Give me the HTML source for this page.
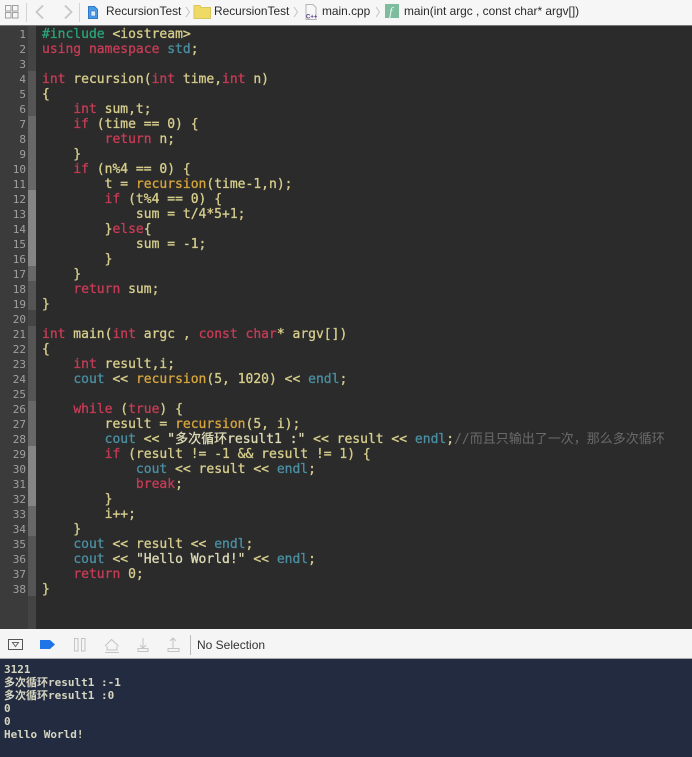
<!DOCTYPE html>
<html><head><meta charset="utf-8">
<style>
html,body{margin:0;padding:0;width:692px;height:757px;overflow:hidden;background:#fff}
*{box-sizing:border-box}
.abs{position:absolute}
#top{left:0;top:0;width:692px;height:26px;background:#f6f6f6;border-bottom:1px solid #777}
.crumb{position:absolute;top:4px;font:11.9px/15px "Liberation Sans",sans-serif;color:#2a2a2a;white-space:pre}
#editor{left:0;top:26px;width:692px;height:603px;background:#2b2b2b}
#gutter{left:0;top:26px;width:28px;height:603px;background:#3b3b3b}
#strip{left:28px;top:26px;width:8px;height:603px;background:#444}
.band{position:absolute;left:28px;width:8px}
#nums{left:0;top:1px;width:28px;height:630px;filter:blur(.3px)}
.ln{position:absolute;left:0;width:26px;text-align:right;font:11px/15px "DejaVu Sans Mono",monospace;color:#a0a0a0}
pre{margin:0}
#code{left:42px;top:27px;font:13px/15px "DejaVu Sans Mono","Noto Sans CJK SC",monospace;color:#d6cd8c;white-space:pre;-webkit-text-stroke:.3px currentColor;filter:blur(.3px)}
.k{color:#c63c56}.c{color:#4a8fa2}.f{color:#d6a53c}.p{color:#2aa377}.w{color:#e0ddb8}.g{color:#6a6a6a;-webkit-text-stroke:0}.s{color:#dedbb6}
#bar{left:0;top:629px;width:692px;height:30px;background:#f5f5f5;border-bottom:1px solid #aaa}
#console{left:0;top:659px;width:692px;height:98px;background:#232b40}
#out{left:4px;top:663px;font:bold 11px/13px "DejaVu Sans Mono","Noto Sans CJK SC",monospace;color:#d6d6c0;white-space:pre;filter:blur(.3px)}
</style></head><body>
<div class="abs" id="top"></div>
<svg class="abs" style="left:0;top:0" width="692" height="25" fill="none">
<g stroke="#a0a0a0" stroke-width="1"><rect x="5.500" y="5.500" width="5.500" height="5.500"/><rect x="12.500" y="5.500" width="5.500" height="5.500"/><rect x="5.500" y="12.500" width="5.500" height="5.500"/><rect x="12.500" y="12.500" width="5.500" height="5.500"/></g>
<path d="M26.500 3v19M79.500 3v19" stroke="#d4d4d4"/>
<path d="M43 5.500l-6.500 6.500 6.500 6.500M65 5.500l6.500 6.500-6.500 6.500" stroke="#c6c6c6" stroke-width="1.800"/>
<path d="M88.500 6.500h6l3 3v9h-9z" fill="#4a9be6" stroke="#2f78c8"/><rect x="91" y="11" width="4.500" height="5" fill="#dcecfa" stroke="#2f78c8" stroke-width=".6"/>
<path d="M194 5.500h6l1 2h9.500v11h-16.500z" fill="#efda66" stroke="#d8c65a"/>
<path d="M306 4.500h7l3 3v12h-10z" fill="#f7f7f7" stroke="#b5b5b5"/>
<text x="306" y="18.500" font-family="Liberation Sans,sans-serif" font-size="6" font-weight="bold" fill="#5a3a90">C++</text>
<rect x="385" y="4" width="14" height="14" fill="#7dbd9e"/><text x="389" y="16" font-family="Liberation Serif,serif" font-style="italic" font-size="13" fill="#eaf5ef">f</text>
<path d="M186 7l3.500 5-3.500 5M294 7l3.500 5-3.500 5M376 7l3.500 5-3.500 5" stroke="#c4c4c4"/>
</svg>
<div class="crumb" style="left:106px">RecursionTest</div>
<div class="crumb" style="left:214px">RecursionTest</div>
<div class="crumb" style="left:322px">main.cpp</div>
<div class="crumb" style="left:404px">main(int argc , const char* argv[])</div>

<div class="abs" id="editor"></div>
<div class="abs" id="gutter"></div>
<div class="abs" id="strip"></div>
<div class="band" style="top:71px;height:45px;background:#555"></div>
<div class="band" style="top:116px;height:74px;background:#686868"></div>
<div class="band" style="top:190px;height:76px;background:#858585"></div>
<div class="band" style="top:266px;height:15px;background:#686868"></div>
<div class="band" style="top:281px;height:29px;background:#555"></div>
<div class="band" style="top:326px;height:75px;background:#555"></div>
<div class="band" style="top:401px;height:45px;background:#686868"></div>
<div class="band" style="top:446px;height:60px;background:#858585"></div>
<div class="band" style="top:506px;height:30px;background:#686868"></div>
<div class="band" style="top:536px;height:60px;background:#555"></div>

<div class="abs" id="nums">
<div class="ln" style="top:26px">1</div><div class="ln" style="top:41px">2</div><div class="ln" style="top:56px">3</div><div class="ln" style="top:71px">4</div><div class="ln" style="top:86px">5</div><div class="ln" style="top:101px">6</div><div class="ln" style="top:116px">7</div><div class="ln" style="top:131px">8</div><div class="ln" style="top:146px">9</div><div class="ln" style="top:161px">10</div><div class="ln" style="top:176px">11</div><div class="ln" style="top:191px">12</div><div class="ln" style="top:206px">13</div><div class="ln" style="top:221px">14</div><div class="ln" style="top:236px">15</div><div class="ln" style="top:251px">16</div><div class="ln" style="top:266px">17</div><div class="ln" style="top:281px">18</div><div class="ln" style="top:296px">19</div><div class="ln" style="top:311px">20</div><div class="ln" style="top:326px">21</div><div class="ln" style="top:341px">22</div><div class="ln" style="top:356px">23</div><div class="ln" style="top:371px">24</div><div class="ln" style="top:386px">25</div><div class="ln" style="top:401px">26</div><div class="ln" style="top:416px">27</div><div class="ln" style="top:431px">28</div><div class="ln" style="top:446px">29</div><div class="ln" style="top:461px">30</div><div class="ln" style="top:476px">31</div><div class="ln" style="top:491px">32</div><div class="ln" style="top:506px">33</div><div class="ln" style="top:521px">34</div><div class="ln" style="top:536px">35</div><div class="ln" style="top:551px">36</div><div class="ln" style="top:566px">37</div><div class="ln" style="top:581px">38</div>
</div>

<pre class="abs" id="code"><span class="p">#include</span> &lt;iostream&gt;
<span class="k">using namespace</span> <span class="c">std</span>;

<span class="k">int</span> recursion(<span class="k">int</span> time,<span class="k">int</span> n)
{
    <span class="k">int</span> sum,t;
    <span class="k">if</span> (time == 0) {
        <span class="k">return</span> n;
    }
    <span class="k">if</span> (n%4 == 0) {
        t = <span class="f">recursion</span>(time-1,n);
        <span class="k">if</span> (t%4 == 0) {
            sum = t/4*5+1;
        }<span class="k">else</span>{
            sum = -1;
        }
    }
    <span class="k">return</span> sum;
}

<span class="k">int</span> main(<span class="k">int</span> argc , <span class="k">const char</span>* argv[])
{
    <span class="k">int</span> result,i;
    <span class="c">cout</span> &lt;&lt; <span class="f">recursion</span>(5, 1020) &lt;&lt; <span class="c">endl</span>;

    <span class="k">while</span> (<span class="k">true</span>) {
        result = <span class="f">recursion</span>(5, i);
        <span class="c">cout</span> &lt;&lt; <span class="s">"多次循环result1 :"</span> &lt;&lt; result &lt;&lt; <span class="c">endl</span>;<span class="g">//而且只输出了一次，那么多次循环</span>
        <span class="k">if</span> (result != -1 &amp;&amp; result != 1) {
            <span class="c">cout</span> &lt;&lt; result &lt;&lt; <span class="c">endl</span>;
            <span class="k">break</span>;
        }
        i++;
    }
    <span class="c">cout</span> &lt;&lt; result &lt;&lt; <span class="c">endl</span>;
    <span class="c">cout</span> &lt;&lt; <span class="s">"Hello World!"</span> &lt;&lt; <span class="c">endl</span>;
    <span class="k">return</span> 0;
}</pre>

<div class="abs" id="bar"></div>
<svg class="abs" style="left:0;top:629px" width="200" height="30" fill="none">
<rect x="8.500" y="10.500" width="14" height="10" stroke="#555"/><path d="M12.500 13.500h6l-3 4z" stroke="#666"/>
<path d="M40 11h10l5 4.500-5 4.500H40z" fill="#1f74e8"/>
<g stroke="#c4c4c4"><rect x="74.500" y="9.500" width="3.500" height="12.500"/><rect x="81.500" y="9.500" width="3.500" height="12.500"/>
<path d="M105 17l6.500-6.500 7 6.500M107 17v4h10v-4M105 23.500h14"/>
<path d="M143 9v10M140 16l3 3 3-3M138 19.500h10v3h-10z"/>
<path d="M173 19V9M170 12l3-3 3 3M168 19.500h11v3h-11z"/></g>
<path d="M190.500 6v20" stroke="#bcbcbc"/>
</svg>
<div class="abs" style="left:197px;top:638px;font:12px/15px 'Liberation Sans',sans-serif;color:#333">No Selection</div>
<div class="abs" id="console"></div>
<pre class="abs" id="out">3121
多次循环result1 :-1
多次循环result1 :0
0
0
Hello World!</pre>
</body></html>
